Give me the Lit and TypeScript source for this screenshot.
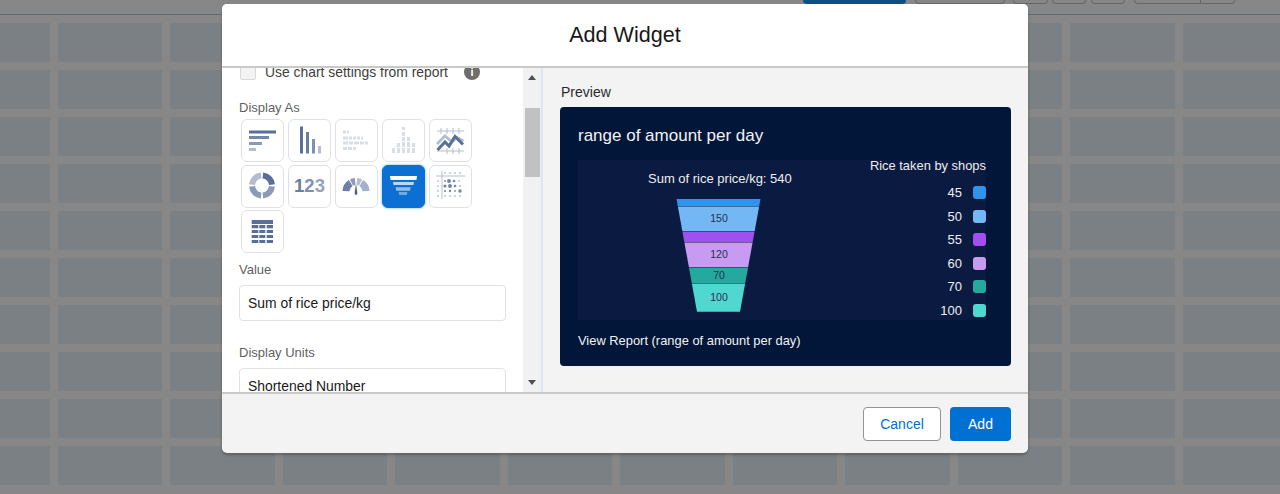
import { LitElement, html, css, svg } from "lit";
import { customElement } from "lit/decorators.js";

const INK = "#5a6f96";
const MID = "#8b9ab5";
const PALE = "#b3bdcf";
const FAINT = "#d8dde6";

const arc = (r: number, a0: number, a1: number, cx: number, cy: number) => {
  const p = (a: number) => {
    const t = (a * Math.PI) / 180;
    return `${(cx + r * Math.cos(t)).toFixed(2)} ${(cy - r * Math.sin(t)).toFixed(2)}`;
  };
  return `M${p(a0)}A${r} ${r} 0 0 1 ${p(a1)}`;
};

const icons = [
  svg`<rect x="8" y="11.5" width="27" height="3" fill="${INK}"/><rect x="8" y="17" width="20" height="3" fill="#7486a8"/><rect x="8" y="23" width="13" height="3" fill="${MID}"/><rect x="8" y="29" width="7" height="3" fill="${PALE}"/>`,
  svg`<rect x="12" y="7.5" width="3" height="27" fill="${INK}"/><rect x="18" y="13" width="3" height="21.5" fill="#6a7da1"/><rect x="24" y="20" width="3" height="14.5" fill="#7f90af"/><rect x="30" y="27" width="3" height="7.5" fill="${PALE}"/>`,
  svg`<g fill="${FAINT}"><rect x="8" y="11.5" width="3" height="3"/><rect x="12" y="11.5" width="2" height="3"/><rect x="8" y="17.5" width="5" height="3"/><rect x="14" y="17.5" width="3" height="3"/><rect x="18" y="17.5" width="3" height="3"/><rect x="22" y="17.5" width="3" height="3"/><rect x="26" y="17.5" width="2" height="3"/><rect x="8" y="22.5" width="5" height="3"/><rect x="14" y="22.5" width="4" height="3"/><rect x="19" y="22.5" width="5" height="3"/><rect x="25" y="22.5" width="4" height="3"/><rect x="30" y="22.5" width="3" height="3"/><rect x="8" y="28" width="4" height="3"/><rect x="13" y="28" width="4" height="3"/><rect x="18" y="28" width="3" height="3"/></g>`,
  svg`<g fill="${FAINT}"><rect x="10" y="29" width="3" height="5"/><rect x="15" y="24" width="3" height="4"/><rect x="15" y="29" width="3" height="5"/><rect x="20" y="8" width="3" height="3"/><rect x="20" y="13" width="3" height="4"/><rect x="20" y="18" width="3" height="4"/><rect x="20" y="23" width="3" height="5"/><rect x="20" y="29" width="3" height="5"/><rect x="25" y="18" width="3" height="4"/><rect x="25" y="23" width="3" height="5"/><rect x="25" y="29" width="3" height="5"/><rect x="30" y="24" width="3" height="4"/><rect x="30" y="29" width="3" height="5"/></g>`,
  svg`<path d="M8 12H35M8 32H35M12 9V15M18 9V15M24 9V15M30 9V15M18 29V35M24 29V35M30 29V35" stroke="${PALE}" stroke-width="1" fill="none"/><path d="M8 25L16 17L23 23L28 18.5L34.5 22" fill="none" stroke="${PALE}" stroke-width="2.8"/><path d="M8.5 31L16 23L20 27L26 17.5L34 25.5" fill="none" stroke="${INK}" stroke-width="3"/>`,
  svg`<g fill="none" stroke-width="6"><path d="${arc(10, 85, 5, 21, 21.5)}" stroke="${INK}"/><path d="${arc(10, -5, -85, 21, 21.5)}" stroke="${MID}"/><path d="${arc(10, -95, -175, 21, 21.5)}" stroke="${MID}"/><path d="${arc(10, 175, 95, 21, 21.5)}" stroke="${PALE}"/></g>`,
  svg``,
  svg`<g fill="none" stroke-width="7"><path d="${arc(10, 178, 122, 21, 27.5)}" stroke="#6f82a5"/><path d="${arc(10, 117, 95, 21, 27.5)}" stroke="${MID}"/><path d="${arc(10, 85, 63, 21, 27.5)}" stroke="${PALE}"/><path d="${arc(10, 58, 2, 21, 27.5)}" stroke="#a5b1c8"/></g><path d="M19.4 29L21 16.5L22.6 29A1.6 2.2 0 0 1 19.4 29Z" fill="#46597e" stroke="#fff" stroke-width=".6"/>`,
  svg`<path d="M8 12H35L34.4 16H8.6Z" fill="#fff"/><path d="M11 18H32L31.4 21H11.6Z" fill="#fff" opacity=".72"/><path d="M13.6 23.3H28.6L28 26.7H14.2Z" fill="#fff" opacity=".55"/><path d="M16.6 28H25.4L24.8 31H17.2Z" fill="#fff" opacity=".42"/>`,
  svg`<path d="M7 12H36M13 7V35" stroke="${PALE}" stroke-width="1" fill="none"/><g fill="#7486a8"><circle cx="16" cy="9" r=".7"/><circle cx="21" cy="9" r=".7"/><circle cx="26" cy="9" r=".7"/><circle cx="31" cy="9" r=".7"/><circle cx="9" cy="17" r=".7"/><circle cx="9" cy="22" r=".7"/><circle cx="9" cy="27" r=".7"/><circle cx="9" cy="32" r=".7"/><circle cx="20" cy="17" r="2"/><circle cx="16" cy="17" r="1"/><circle cx="25" cy="17" r="1.3"/><circle cx="30" cy="17" r=".7"/><circle cx="16" cy="22" r="1.6"/><circle cx="21" cy="22" r="2"/><circle cx="26" cy="22" r="1.3"/><circle cx="31" cy="22" r=".8"/><circle cx="16" cy="27" r="1"/><circle cx="21" cy="27" r="1.2"/><circle cx="26" cy="27" r=".9"/><circle cx="31" cy="27" r="1.7"/><circle cx="16" cy="32" r=".7"/><circle cx="21" cy="32" r=".7"/><circle cx="26" cy="32" r=".7"/><circle cx="31" cy="32" r=".7"/></g>`,
  svg`<g fill="${INK}"><rect x="10.7" y="10" width="21.3" height="4"/><rect x="10.7" y="15" width="6.6" height="3.3"/><rect x="18.3" y="15" width="6" height="3.3"/><rect x="25.7" y="15" width="6.3" height="3.3"/><rect x="10.7" y="20" width="6.6" height="3"/><rect x="18.3" y="20" width="6" height="3"/><rect x="25.7" y="20" width="6.3" height="3"/><rect x="10.7" y="25" width="6.6" height="3"/><rect x="18.3" y="25" width="6" height="3"/><rect x="25.7" y="25" width="6.3" height="3"/><rect x="10.7" y="30" width="6.6" height="3"/><rect x="18.3" y="30" width="6" height="3"/><rect x="25.7" y="30" width="6.3" height="3"/></g>`,
];

const legend: [string, string][] = [
  ["45", "#2e94ec"],
  ["50", "#74b7f5"],
  ["55", "#a050ee"],
  ["60", "#c79bf2"],
  ["70", "#25a99f"],
  ["100", "#4fd8cf"],
];

const topWidth = 84;
const bottomWidth = 43;
const funnelTop = 199;
const funnelBottom = 311.7;
const funnelCenter = 718.5;
const segs: [number, number, string, string][] = [
  [199, 206, "#2e94ec", ""],
  [206.6, 231, "#74b7f5", "150"],
  [231.4, 242, "#a050ee", ""],
  [242.4, 267, "#c79bf2", "120"],
  [267.4, 283, "#25a99f", "70"],
  [283.4, 311.7, "#4fd8cf", "100"],
];
const halfAt = (y: number) =>
  (topWidth + ((y - funnelTop) / (funnelBottom - funnelTop)) * (bottomWidth - topWidth)) / 2;

@customElement("app-root")
export class AppRoot extends LitElement {
  static styles = css`
    :host {
      display: block;
      position: relative;
      width: 1280px;
      height: 494px;
      overflow: hidden;
      background: #878787;
      font-family: "Liberation Sans", Arial, sans-serif;
    }
    .toolbar { display: flex; height: 13.5px; padding-left: 803px; gap: 9px; box-sizing: border-box; }
    .tb { height: 4px; box-sizing: border-box; border: 1px solid #666; border-top: 0; border-radius: 0 0 4px 4px; }
    .tb.primary { width: 103px; background: #0b4d85; border: 0; }
    .tb.a { width: 90px; }
    .tb.b { width: 35px; margin-left: -1px; }
    .tb.c { width: 34px; margin-left: -5px; }
    .tb.d { width: 34px; margin-left: -4px; }
    .tb.e { width: 101px; display: flex; justify-content: flex-end; }
    .tb.e i { display: block; width: 33px; border-left: 1px solid #666; }
    .rule { height: 1.5px; background: #5f6b73; }
    .grid {
      display: grid;
      grid-template-columns: 49.5px repeat(11, 104.5px);
      grid-auto-rows: 38.5px;
      column-gap: 8px;
      row-gap: 8.5px;
      padding-top: 8px;
    }
    .cell { background: #7b8084; }
    .modal {
      position: absolute;
      left: 222px;
      top: 4px;
      width: 806px;
      height: 449px;
      display: flex;
      flex-direction: column;
      border-radius: 5px;
      overflow: hidden;
      background: #f3f3f3;
      box-shadow: 0 2px 3px rgba(0, 0, 0, 0.25);
    }
    .head {
      height: 62px;
      flex: none;
      background: #fff;
      display: flex;
      align-items: center;
      justify-content: center;
      font-size: 21.6px;
      color: #181818;
      border-bottom: 2px solid #c9c9c9;
    }
    .body { flex: 1; min-height: 0; display: flex; }
    .left { width: 301px; flex: none; background: #fff; overflow: hidden; box-sizing: border-box; padding: 0 17px; }
    .scrolled { margin-top: -4px; }
    .check { display: flex; align-items: center; height: 16px; }
    .box { width: 16px; height: 16px; box-sizing: border-box; background: #f3f3f3; border: 1px solid #d8d8d8; border-radius: 2px; margin-left: 1px; }
    .check span { font-size: 13.9px; color: #3e3e3c; margin-left: 9px; }
    .info { width: 16px; height: 16px; border-radius: 50%; background: #706e6b; color: #fff; font: bold 11px/16px "Liberation Sans", sans-serif; text-align: center; margin-left: 16px; }
    label { display: block; font-size: 13px; color: #5f5f5f; line-height: 16px; }
    .l1 { margin-top: 20px; }
    .tiles { display: grid; grid-template-columns: repeat(5, 43px); grid-auto-rows: 43px; gap: 2.5px 4px; margin: 3px 0 0 2px; }
    .tile { box-sizing: border-box; border: 1.5px solid #dfe1e6; border-radius: 6px; background: #fff; position: relative; display: flex; align-items: center; justify-content: center; }
    .tile svg { position: absolute; left: -1.5px; top: -1.5px; width: 43px; height: 43px; }
    .tile.sel { background: #0b6fd4; border-color: #0b6fd4; box-shadow: 0 0 3px #6fb2f0; }
    .nums { font: bold 18.5px "Liberation Sans", sans-serif; color: #7f90af; }
    .nums b { color: #6a7da1; font-weight: bold; }
    .nums em { font-style: normal; color: #94a3bd; }
    .l2 { margin-top: 9px; }
    .input { box-sizing: border-box; width: 267px; height: 36px; border: 1px solid #e2e2e2; border-radius: 4px; background: #fff; font-size: 13.9px; color: #181818; padding: 0 8px; display: flex; align-items: center; margin-top: 7px; }
    .l3 { margin-top: 24px; }
    .sb { width: 18px; flex: none; background: #f1f1f1; display: flex; flex-direction: column; align-items: center; }
    .up { width: 0; height: 0; border: 4px solid transparent; border-top: 0; border-bottom: 5px solid #505050; margin-top: 7px; }
    .thumb { width: 15px; height: 69px; background: #c1c1c1; margin-top: 28px; }
    .down { width: 0; height: 0; border: 4px solid transparent; border-bottom: 0; border-top: 5px solid #505050; margin-top: auto; margin-bottom: 7px; }
    .sep { width: 2px; flex: none; background: #dde5ee; }
    .right { flex: 1; min-width: 0; padding: 16px 17px 0; box-sizing: border-box; }
    .pv { font-size: 14px; line-height: 16px; color: #2b2b2b; margin-left: 1px; }
    .card { margin-top: 7px; height: 259px; width: 451px; box-sizing: border-box; background: #011638; border-radius: 4px; padding: 18px 18px 0; color: #fff; }
    .card h2 { margin: 0; font-weight: 400; font-size: 17px; line-height: 21px; color: #f2f2f2; }
    .chart { margin-top: 14px; height: 160px; width: 408px; background: #0a1a40; position: relative; }
    .chart svg { position: absolute; left: 0; top: 0; width: 408px; height: 160px; }
    .sum { position: absolute; left: 70px; top: 11px; font-size: 13px; line-height: 16px; color: #eee; white-space: nowrap; }
    .legend { position: absolute; right: 0; top: 0; display: flex; flex-direction: column; align-items: flex-end; }
    .ltitle { font-size: 12.9px; line-height: 16px; margin-top: -2px; color: #eee; white-space: nowrap; }
    .lrows { margin-top: 7px; display: grid; grid-auto-rows: 23.5px; }
    .lrow { display: flex; align-items: center; justify-content: flex-end; gap: 11px; font-size: 13px; color: #eee; }
    .sw { width: 13px; height: 13px; border-radius: 3px; }
    .view { margin-top: 13px; font-size: 12.9px; line-height: 16px; color: #f2f2f2; }
    .foot { height: 59px; flex: none; border-top: 2px solid #c9c9c9; display: flex; align-items: center; justify-content: flex-end; gap: 9px; padding-right: 17px; }
    .btn { height: 34px; box-sizing: border-box; border-radius: 4px; font-size: 14px; display: flex; align-items: center; justify-content: center; }
    .cancel { width: 78px; background: #fff; border: 1px solid #969492; color: #0070d2; }
    .add { width: 61px; background: #0070d2; color: #fff; }
  `;

  render() {
    const cells = Array.from({ length: 120 });
    return html`
      <div class="toolbar">
        <div class="tb primary"></div>
        <div class="tb a"></div>
        <div class="tb b"></div>
        <div class="tb c"></div>
        <div class="tb d"></div>
        <div class="tb e"><i></i></div>
      </div>
      <div class="rule"></div>
      <div class="grid">${cells.map(() => html`<div class="cell"></div>`)}</div>
      <div class="modal">
        <div class="head">Add Widget</div>
        <div class="body">
          <div class="left">
            <div class="scrolled">
              <div class="check"><div class="box"></div><span>Use chart settings from report</span><div class="info">i</div></div>
              <label class="l1">Display As</label>
              <div class="tiles">
                ${icons.map((ic, i) => html`<div class="tile ${i === 8 ? "sel" : ""}">
                  ${i === 6
                    ? html`<span class="nums"><b>1</b>2<em>3</em></span>`
                    : html`<svg viewBox="0 0 43 43">${ic}</svg>`}
                </div>`)}
              </div>
              <label class="l2">Value</label>
              <div class="input">Sum of rice price/kg</div>
              <label class="l3">Display Units</label>
              <div class="input">Shortened Number</div>
            </div>
          </div>
          <div class="sb"><div class="up"></div><div class="thumb"></div><div class="down"></div></div>
          <div class="sep"></div>
          <div class="right">
            <div class="pv">Preview</div>
            <div class="card">
              <h2>range of amount per day</h2>
              <div class="chart">
                <svg viewBox="578 160 408 160">
                  ${segs.map(([a, b, c]) => svg`<polygon fill="${c}" points="${funnelCenter - halfAt(a)},${a} ${funnelCenter + halfAt(a)},${a} ${funnelCenter + halfAt(b)},${b} ${funnelCenter - halfAt(b)},${b}"/>`)}
                  ${segs.filter((s) => s[3]).map(([a, b, , t]) => svg`<text x="${funnelCenter + 0.5}" y="${(a + b) / 2 + 3.5}" text-anchor="middle" font-size="10.5" fill="#24304f" font-family="Liberation Sans, Arial, sans-serif">${t}</text>`)}
                </svg>
                <div class="sum">Sum of rice price/kg: 540</div>
                <div class="legend">
                  <div class="ltitle">Rice taken by shops</div>
                  <div class="lrows">
                    ${legend.map(([t, c]) => html`<div class="lrow">${t}<span class="sw" style="background:${c}"></span></div>`)}
                  </div>
                </div>
              </div>
              <div class="view">View Report (range of amount per day)</div>
            </div>
          </div>
        </div>
        <div class="foot">
          <div class="btn cancel">Cancel</div>
          <div class="btn add">Add</div>
        </div>
      </div>
    `;
  }
}
